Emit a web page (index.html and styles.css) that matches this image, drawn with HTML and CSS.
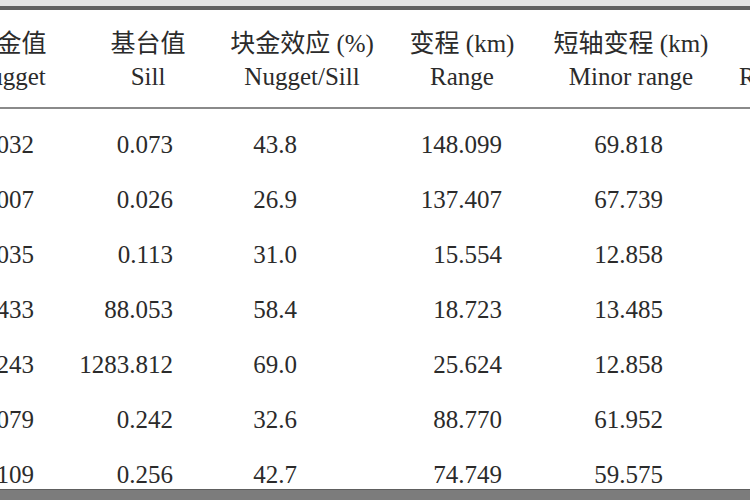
FILE: index.html
```html
<!DOCTYPE html>
<html lang="zh">
<head>
<meta charset="utf-8">
<link rel="stylesheet" href="styles.css">
</head>
<body>
<div class="page">
  <div class="table">
    <div class="head">
      <div class="hc"><div class="zh">块金值</div><div class="en">Nugget</div></div>
      <div class="hc"><div class="zh">基台值</div><div class="en">Sill</div></div>
      <div class="hc"><div class="zh">块金效应 (%)</div><div class="en">Nugget/Sill</div></div>
      <div class="hc"><div class="zh">变程 (km)</div><div class="en">Range</div></div>
      <div class="hc"><div class="zh">短轴变程 (km)</div><div class="en">Minor range</div></div>
      <div class="hc"><div class="zh">变程比</div><div class="en">Range ratio</div></div>
    </div>
    <div class="body">
      <div class="row"><div class="c c0">0.032</div><div class="c c1">0.073</div><div class="c c2">43.8</div><div class="c c3">148.099</div><div class="c c4">69.818</div><div class="c c5">2.121</div></div>
      <div class="row"><div class="c c0">0.007</div><div class="c c1">0.026</div><div class="c c2">26.9</div><div class="c c3">137.407</div><div class="c c4">67.739</div><div class="c c5">2.028</div></div>
      <div class="row"><div class="c c0">0.035</div><div class="c c1">0.113</div><div class="c c2">31.0</div><div class="c c3">15.554</div><div class="c c4">12.858</div><div class="c c5">1.210</div></div>
      <div class="row"><div class="c c0">51.433</div><div class="c c1">88.053</div><div class="c c2">58.4</div><div class="c c3">18.723</div><div class="c c4">13.485</div><div class="c c5">1.388</div></div>
      <div class="row"><div class="c c0">886.243</div><div class="c c1">1283.812</div><div class="c c2">69.0</div><div class="c c3">25.624</div><div class="c c4">12.858</div><div class="c c5">1.993</div></div>
      <div class="row"><div class="c c0">0.079</div><div class="c c1">0.242</div><div class="c c2">32.6</div><div class="c c3">88.770</div><div class="c c4">61.952</div><div class="c c5">1.433</div></div>
      <div class="row"><div class="c c0">0.109</div><div class="c c1">0.256</div><div class="c c2">42.7</div><div class="c c3">74.749</div><div class="c c4">59.575</div><div class="c c5">1.255</div></div>
    </div>
    <div class="foot"></div>
  </div>
</div>
</body>
</html>
```
FILE: styles.css
```css
html, body {
  margin: 0;
  padding: 0;
  background: #ffffff;
}
body {
  width: 750px;
  height: 500px;
  overflow: hidden;
  font-family: "Liberation Serif", "Noto Sans CJK SC", serif;
  font-size: 25px;
  color: #2b2b2b;
}
.page {
  width: 750px;
  height: 500px;
  overflow: hidden;
  border-top: 6px solid #e3e3e3;
  box-sizing: border-box;
}
.table {
  margin-left: -60px;
  width: 930px;
  border-top: 4px solid #606060;
}
.head, .row {
  display: grid;
  grid-template-columns: 138px 140px 168px 152px 186px 146px;
}
.head {
  padding-top: 19px;
  padding-bottom: 16px;
  border-bottom: 2px solid #8a8a8a;
}
.hc {
  display: flex;
  flex-direction: column;
  align-items: center;
  gap: 4px;
  line-height: 29px;
  white-space: nowrap;
}
.body {
  display: flex;
  flex-direction: column;
  gap: 26px;
  padding-top: 21px;
}
.c {
  line-height: 29px;
  text-align: right;
  white-space: nowrap;
}
.c0 { padding-right: 44px; }
.c1 { padding-right: 45px; }
.c2 { padding-right: 89px; }
.c3 { padding-right: 36px; }
.c4 { padding-right: 61px; }
.c5 { padding-right: 20px; }
.foot {
  height: 12px;
  background: #7c7c7c;
  border-top: 1px solid #5e5e5e;
}
```
